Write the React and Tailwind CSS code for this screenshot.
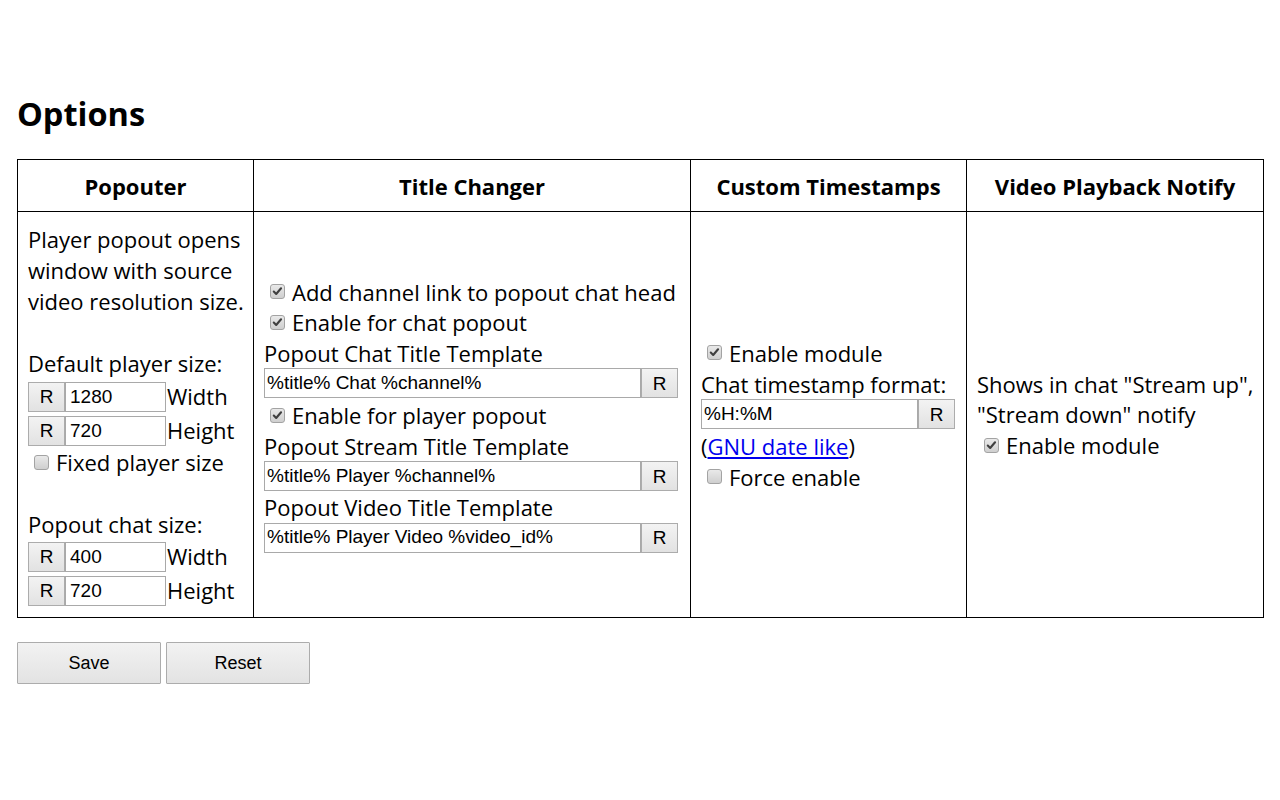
import React from "react";

const Checkbox = ({ checked, className = "" }) => (
  <span
    className={
      "inline-flex h-[15px] w-[15px] shrink-0 items-center justify-center rounded-[3px] border border-[#a3a3a3] bg-linear-to-b from-[#e9e9e9] to-[#cfcfcf] " +
      className
    }
  >
    {checked && (
      <svg viewBox="0 0 15 15" className="h-[13px] w-[13px]">
        <path
          d="M3.2 7.6 L6 10.4 L11.6 3.8"
          stroke="#3f3f3f"
          strokeWidth="2.4"
          fill="none"
          strokeLinecap="round"
          strokeLinejoin="round"
        />
      </svg>
    )}
  </span>
);

const CheckLine = ({ checked, children, className = "", boxMl = "ml-[6px]" }) => (
  <div className={"flex items-center whitespace-nowrap " + className}>
    <Checkbox checked={checked} className={boxMl + " mr-[7px]"} />
    <span>{children}</span>
  </div>
);

const RButton = () => (
  <button className="h-[30px] w-[37px] shrink-0 border border-[#acacac] bg-linear-to-b from-[#f3f3f3] to-[#e2e2e2] font-['Liberation_Sans',Arial,sans-serif] text-[19px] leading-none text-black">
    R
  </button>
);

const TextInput = ({ value, w }) => (
  <input
    readOnly
    value={value}
    className={
      "h-[30px] shrink-0 border border-[#a9a9a9] bg-white px-[2px] font-['Liberation_Sans',Arial,sans-serif] text-[19px] text-black outline-none " +
      w
    }
  />
);

const SizeRow = ({ value, label, className = "" }) => (
  <div className={"flex h-[30px] items-center " + className}>
    <RButton />
    <TextInput value={value} w="w-[101px] pl-[4px]" />
    <span className="ml-[1px]">{label}</span>
  </div>
);

const InputRow = ({ value, w, className = "" }) => (
  <div className={"flex h-[30px] " + className}>
    <TextInput value={value} w={w} />
    <RButton />
  </div>
);

export default function App() {
  return (
    <div className="min-h-[800px] bg-white px-[17px] pt-[98px] font-['Open_Sans',sans-serif] text-black">
      <h1 className="m-0 text-[32.5px] font-bold leading-[32px]">Options</h1>

      <div className="mt-[29px] grid w-[1247px] grid-cols-[236px_437px_276px_297px] grid-rows-[52px_406px] border-l border-t border-black text-[22px] leading-[30.5px] whitespace-nowrap">
        {["Popouter", "Title Changer", "Custom Timestamps", "Video Playback Notify"].map((h) => (
          <div
            key={h}
            className="flex items-center justify-center border-b border-r border-black pt-[2px] font-bold"
          >
            {h}
          </div>
        ))}

        {/* Popouter */}
        <div className="flex flex-col justify-center border-b border-r border-black pl-[10px] leading-[31px]">
          <div>Player popout opens</div>
          <div>window with source</div>
          <div>video resolution size.</div>
          <div className="h-[31px]" />
          <div>Default player size:</div>
          <SizeRow className="mt-[3px]" value="1280" label="Width" />
          <SizeRow className="mt-[4px]" value="720" label="Height" />
          <CheckLine className="mt-[1px] h-[31px]">Fixed player size</CheckLine>
          <div className="h-[31px]" />
          <div>Popout chat size:</div>
          <SizeRow className="mt-[2px]" value="400" label="Width" />
          <SizeRow className="mt-[4px]" value="720" label="Height" />
        </div>

        {/* Title Changer */}
        <div className="flex flex-col justify-center border-b border-r border-black pl-[10px]">
          <CheckLine checked className="h-[30.5px]">Add channel link to popout chat head</CheckLine>
          <CheckLine checked className="h-[30.5px]">Enable for chat popout</CheckLine>
          <div>Popout Chat Title Template</div>
          <InputRow value="%title% Chat %channel%" w="w-[377px]" className="mb-[2px]" />
          <CheckLine checked className="h-[30.5px]">Enable for player popout</CheckLine>
          <div>Popout Stream Title Template</div>
          <InputRow value="%title% Player %channel%" w="w-[377px]" className="mb-[1px]" />
          <div>Popout Video Title Template</div>
          <InputRow value="%title% Player Video %video_id%" w="w-[377px]" />
        </div>

        {/* Custom Timestamps */}
        <div className="flex flex-col justify-center border-b border-r border-black pl-[10px]">
          <CheckLine checked className="h-[31.5px]">Enable module</CheckLine>
          <div>Chat timestamp format:</div>
          <InputRow value="%H:%M" w="w-[217px]" className="mb-[2px]" />
          <div>
            (<a href="#" className="text-[#0000ee] underline">GNU date like</a>)
          </div>
          <CheckLine className="h-[30.5px]">Force enable</CheckLine>
        </div>

        {/* Video Playback Notify */}
        <div className="flex flex-col justify-center border-b border-r border-black pl-[10px]">
          <div>{'Shows in chat "Stream up",'}</div>
          <div>{'"Stream down" notify'}</div>
          <CheckLine checked className="h-[30.5px]" boxMl="ml-[7px]">
            Enable module
          </CheckLine>
        </div>
      </div>

      <div className="mt-[24px] flex gap-[5px]">
        {["Save", "Reset"].map((b) => (
          <button
            key={b}
            className="h-[42px] w-[144px] rounded-[1px] border border-[#acacac] bg-linear-to-b from-[#f2f2f2] to-[#e3e3e3] font-['Liberation_Sans',Arial,sans-serif] text-[18px] text-black"
          >
            {b}
          </button>
        ))}
      </div>
    </div>
  );
}
